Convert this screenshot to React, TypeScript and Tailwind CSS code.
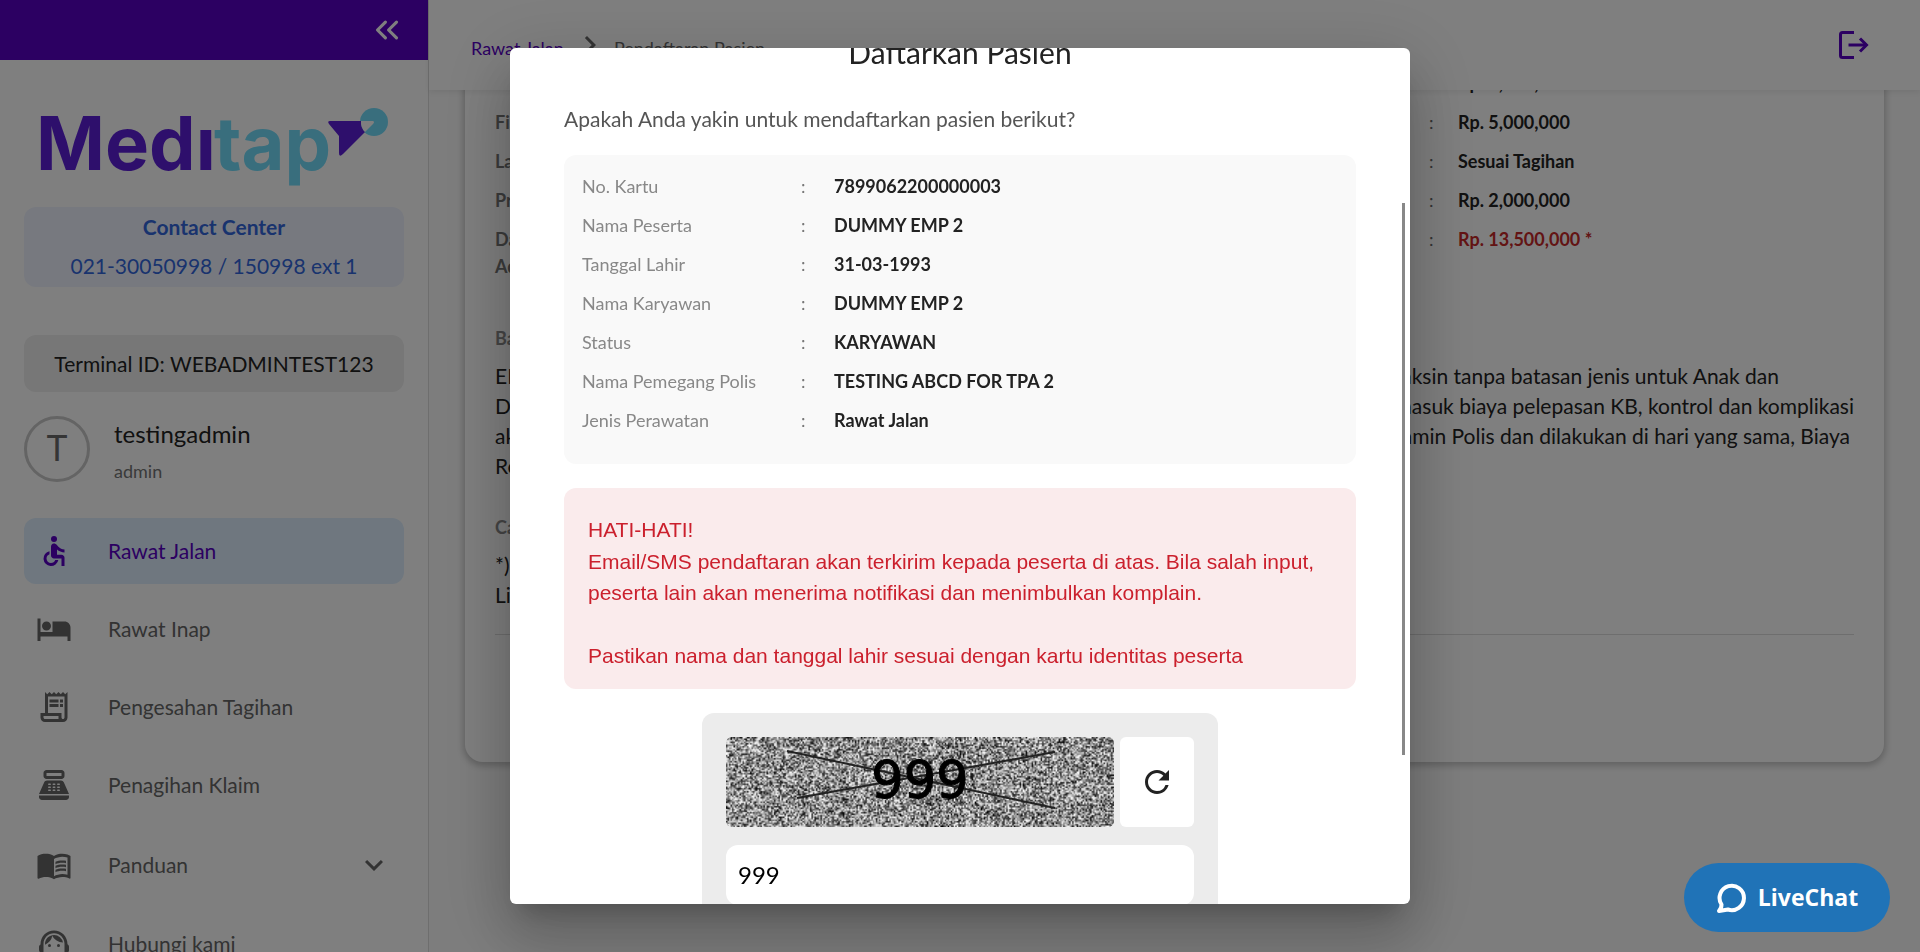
import { useLayoutEffect, useRef, useState } from "react";
import type { ReactNode } from "react";
import { ChevronsLeft } from "lucide-react";
import {
  MdAccessible,
  MdChevronRight,
  MdExpandMore,
  MdHotel,
  MdMenuBook,
  MdOutlineReceiptLong,
  MdPointOfSale,
  MdRefresh,
  MdSupportAgent,
} from "react-icons/md";

function Logo() {
  return (
    <svg viewBox="0 0 350 84" className="h-[84px] w-[350px] overflow-visible" role="img" aria-label="Meditap">
      <g fontFamily="Inter, sans-serif" fontWeight="700" fontSize="74">
        <text x="-3" y="62" fill="#5c1fd8">
          Medı
        </text>
        <text x="175" y="62" fill="#72dcfa">
          tap
        </text>
      </g>
      <circle cx="335" cy="14" r="14" fill="#72dcfa" />
      <path
        d="M291 13h31a14 14 0 0 0 4 11l-22 22q-4 4-4-1V28L290 16q-2-3 1-3z"
        fill="#5c1fd8"
      />
      <path d="M322 13h12q2 1 0 3l-8 8a14 14 0 0 1-4-11z" fill="#fff" />
    </svg>
  );
}

type NavItem = { label: string; icon: ReactNode; active?: boolean; expandable?: boolean };

const navItems: NavItem[] = [
  { label: "Rawat Jalan", icon: <MdAccessible size={36} />, active: true },
  { label: "Rawat Inap", icon: <MdHotel size={36} /> },
  { label: "Pengesahan Tagihan", icon: <MdOutlineReceiptLong size={36} /> },
  { label: "Penagihan Klaim", icon: <MdPointOfSale size={36} /> },
  { label: "Panduan", icon: <MdMenuBook size={36} />, expandable: true },
  { label: "Hubungi kami", icon: <MdSupportAgent size={36} /> },
];

function navItemClass(item: NavItem) {
  if (item.active) {
    return "flex h-[66px] shrink-0 items-center rounded-xl bg-[#deeffe] px-3 text-[#5800c4]";
  }
  if (item.expandable) {
    return "flex h-[69px] shrink-0 items-center rounded-xl px-3 text-[#666]";
  }
  return "flex h-[66px] shrink-0 items-center rounded-xl px-3 text-[#666]";
}

function Sidebar() {
  return (
    <aside className="flex w-[429px] shrink-0 flex-col border-r border-[#dcdcdc] bg-white">
      <div className="flex h-[60px] shrink-0 items-center justify-end bg-[#5800c4] pr-[22px]">
        <button type="button" aria-label="Tutup menu" className="text-white">
          <ChevronsLeft size={38} strokeWidth={2} />
        </button>
      </div>
      <div className="flex flex-col px-6">
        <div className="flex justify-center pt-12 pb-[15px]">
          <Logo />
        </div>
        <div className="h-20 rounded-xl bg-[#eff3ff] text-center text-[21px] leading-[39px] text-[#3367dc]">
          <p className="font-bold">Contact Center</p>
          <p>021-30050998 / 150998 ext 1</p>
        </div>
        <div className="mt-12 flex h-[57px] items-center justify-center rounded-xl bg-[#efefef] text-[21px] text-[#222]">
          Terminal ID: WEBADMINTEST123
        </div>
        <div className="mt-6 flex items-center gap-6">
          <div className="flex size-[66px] items-center justify-center rounded-full border-3 border-[#c8c8c8] font-['Roboto',sans-serif] text-4xl text-[#6a6a6a]">
            T
          </div>
          <div>
            <p className="text-2xl leading-9 text-[#222]">testingadmin</p>
            <p className="pt-2 text-lg leading-[22px] text-[#757575]">admin</p>
          </div>
        </div>
        <nav className="mt-9 flex flex-col gap-3">
          {navItems.map((item) => (
            <a key={item.label} href="#" className={navItemClass(item)}>
              {item.icon}
              <span className="ml-9 flex-1 text-[21px]">{item.label}</span>
              {item.expandable && <MdExpandMore size={36} />}
            </a>
          ))}
        </nav>
      </div>
    </aside>
  );
}

const limits = [
  { label: "Kacamata", value: "Rp. 1,000,000" },
  { label: "Fisioterapi", value: "Rp. 5,000,000" },
  { label: "Laboratorium", value: "Sesuai Tagihan" },
  { label: "Prothesa", value: "Rp. 2,000,000" },
];

function BenefitLine({ start, end, endClass }: { start: string; end?: string; endClass?: string }) {
  return (
    <p className="flex justify-between">
      <span>{start}</span>
      <span className={endClass}>{end}</span>
    </p>
  );
}

function Main() {
  return (
    <div className="flex min-w-0 flex-1 flex-col bg-[#fafafa]">
      <header className="relative z-10 flex h-[90px] shrink-0 items-center justify-between bg-white pr-12 pl-[42px] shadow-[0_2px_6px_rgba(0,0,0,0.08)]">
        <nav className="flex items-center text-lg text-[#666]">
          <a href="#" className="pt-1.5 text-[#5800c4]">
            Rawat Jalan
          </a>
          <MdChevronRight size={36} className="mr-1.5 ml-2" />
          <span className="pt-1.5">Pendaftaran Pasien</span>
        </nav>
        <button type="button" aria-label="Keluar" className="text-[#5800c4]">
          <svg viewBox="0 0 36 36" className="size-9" fill="none" stroke="currentColor" strokeWidth="3">
            <path d="M18 5.500H6.500Q4.500 5.500 4.500 7.500V28.500Q4.500 30.500 6.500 30.500H18" />
            <path d="M12.500 18H30" />
            <path d="M24 11.500L30.500 18L24 24.500" />
          </svg>
        </button>
      </header>
      <main className="min-h-0 flex-1 overflow-hidden px-9">
        <section className="-mt-[26px] rounded-[18px] bg-white px-[30px] pb-[127px] shadow-[0_2px_6px_2px_rgba(0,0,0,0.2)]">
          <dl className="text-lg leading-[39px] font-bold">
            {limits.map((row) => (
              <div key={row.label} className="flex">
                <dt className="flex-1 text-[#757575]">{row.label}</dt>
                <dd className="flex w-[425px] text-[#222]">
                  <span className="w-[29px] font-normal text-[#666]">:</span>
                  {row.value}
                </dd>
              </div>
            ))}
            <div className="flex">
              <dt className="flex-1 pt-1.5 leading-[27px] text-[#757575]">
                Dana
                <br />
                Administrasi
              </dt>
              <dd className="flex w-[425px] text-[#c62828]">
                <span className="w-[29px] font-normal text-[#666]">:</span>
                Rp. 13,500,000 *
              </dd>
            </div>
          </dl>
          <h2 className="mt-[45px] text-lg leading-[27px] font-bold text-[#8a8a8a]">Batasan</h2>
          <div className="mt-[9px] text-[21px] leading-[30px] text-[#222]">
            <BenefitLine start="EDC" end="Vaksin tanpa batasan jenis untuk Anak dan" endClass="pr-[75px]" />
            <BenefitLine start="Dewasa" end="termasuk biaya pelepasan KB, kontrol dan komplikasi" />
            <BenefitLine start="akibat" end="dijamin Polis dan dilakukan di hari yang sama, Biaya" endClass="pr-1" />
            <BenefitLine start="Resep" />
          </div>
          <h2 className="mt-[33px] text-lg leading-[27px] font-bold text-[#8a8a8a]">Catatan</h2>
          <div className="mt-[9px] border-b border-[#dcdcdc] pb-6 text-[21px] leading-[30px] text-[#222]">
            <p>*) Sisa</p>
            <p>Limit</p>
          </div>
        </section>
      </main>
    </div>
  );
}

const patient = [
  ["No. Kartu", "7899062200000003"],
  ["Nama Peserta", "DUMMY EMP 2"],
  ["Tanggal Lahir", "31-03-1993"],
  ["Nama Karyawan", "DUMMY EMP 2"],
  ["Status", "KARYAWAN"],
  ["Nama Pemegang Polis", "TESTING ABCD FOR TPA 2"],
  ["Jenis Perawatan", "Rawat Jalan"],
];

function Captcha() {
  const canvas = useRef<HTMLCanvasElement>(null);

  useLayoutEffect(() => {
    const ctx = canvas.current?.getContext("2d");
    if (!ctx) return;
    const image = ctx.createImageData(259, 60);
    let seed = 20931;
    for (let i = 0; i < image.data.length; i += 4) {
      seed = (seed * 16807) % 2147483647;
      const level = Math.floor(Math.pow(seed / 2147483647, 0.8) * 256);
      image.data[i] = level;
      image.data[i + 1] = level;
      image.data[i + 2] = level;
      image.data[i + 3] = 255;
    }
    ctx.putImageData(image, 0, 0);
  }, []);

  return (
    <div className="relative h-[90px] flex-1 overflow-hidden rounded-md">
      <canvas ref={canvas} width={259} height={60} className="block size-full" />
      <svg
        viewBox="0 0 388 90"
        preserveAspectRatio="none"
        className="absolute inset-0 size-full"
        stroke="#222"
        strokeWidth="2"
      >
        <path d="M61 14L329 71M71 61L329 15" />
      </svg>
      <span className="absolute inset-0 flex items-center justify-center font-['DejaVu_Sans',sans-serif] text-[51px] text-black [-webkit-text-stroke:1px_#000]">
        999
      </span>
    </div>
  );
}

function RegisterDialog() {
  const scroller = useRef<HTMLDivElement>(null);
  const [code, setCode] = useState("999");

  useLayoutEffect(() => {
    if (scroller.current) scroller.current.scrollTop = 240;
  }, []);

  return (
    <div className="fixed inset-0 z-20 flex justify-center bg-black/50 p-12">
      <div
        role="dialog"
        aria-modal="true"
        aria-labelledby="dialog-title"
        className="relative w-full max-w-[900px] rounded-md bg-white shadow-[0_17px_23px_-11px_rgba(0,0,0,0.2),0_36px_57px_5px_rgba(0,0,0,0.14),0_14px_69px_12px_rgba(0,0,0,0.12)]"
      >
        <div
          ref={scroller}
          className="flex h-full flex-col overflow-y-auto rounded-md px-[54px] pt-[222px] [scrollbar-width:none]"
        >
          <h1 id="dialog-title" className="text-center text-3xl leading-[45px] text-[#222]">
            Daftarkan Pasien
          </h1>
          <p className="mt-7 text-[21px] leading-8 text-[#555]">
            Apakah Anda yakin untuk mendaftarkan pasien berikut?
          </p>
          <dl className="mt-5 rounded-xl bg-[#f9f9f9] px-[18px] pt-3 pb-6 text-lg leading-[39px]">
            {patient.map(([label, value]) => (
              <div key={label} className="flex">
                <dt className="w-[219px] text-[#888]">{label}</dt>
                <dd className="flex font-bold text-[#222]">
                  <span className="w-[33px] font-normal text-[#777]">:</span>
                  {value}
                </dd>
              </div>
            ))}
          </dl>
          <div className="mt-6 rounded-xl bg-[#faebec] px-6 pt-[26px] pb-[17px] font-['Liberation_Sans',sans-serif] text-[21px] leading-normal text-[#cb202d]">
            <p>HATI-HATI!</p>
            <p>
              Email/SMS pendaftaran akan terkirim kepada peserta di atas. Bila salah input, peserta
              lain akan menerima notifikasi dan menimbulkan komplain.
            </p>
            <br />
            <p>Pastikan nama dan tanggal lahir sesuai dengan kartu identitas peserta</p>
          </div>
          <div className="mx-auto mt-6 mb-36 w-full max-w-[516px] rounded-xl bg-[#ececec] p-6">
            <div className="flex gap-1.5">
              <Captcha />
              <button
                type="button"
                aria-label="Muat ulang"
                className="flex w-[74px] items-center justify-center rounded-md bg-white text-[#222]"
              >
                <MdRefresh size={36} />
              </button>
            </div>
            <input
              type="text"
              aria-label="Kode captcha"
              value={code}
              onChange={(event) => setCode(event.target.value)}
              className="mt-[18px] mb-24 h-[60px] w-full rounded-xl bg-white px-3 text-2xl text-black outline-none"
            />
          </div>
        </div>
        <div className="absolute top-[155px] right-[5px] h-[552px] w-[3px] bg-[#888]" />
      </div>
    </div>
  );
}

export default function App() {
  return (
    <div className="flex h-screen overflow-hidden font-['Lato',sans-serif]">
      <Sidebar />
      <Main />
      <RegisterDialog />
      <button
        type="button"
        className="fixed right-[30px] bottom-5 z-30 flex h-[69px] w-[206px] items-center justify-center gap-3 rounded-full bg-[#2073b7] font-['Open_Sans',sans-serif] text-[23px] font-bold text-white"
      >
        <svg viewBox="0 0 30 32" className="h-8 w-[30px]" fill="none" stroke="currentColor" strokeWidth="4">
          <path
            d="M5.500 22.500A12.200 12.200 0 1 1 12 27.500L3 29Q5.500 26.500 5.500 22.500z"
            strokeLinejoin="round"
          />
        </svg>
        LiveChat
      </button>
    </div>
  );
}
